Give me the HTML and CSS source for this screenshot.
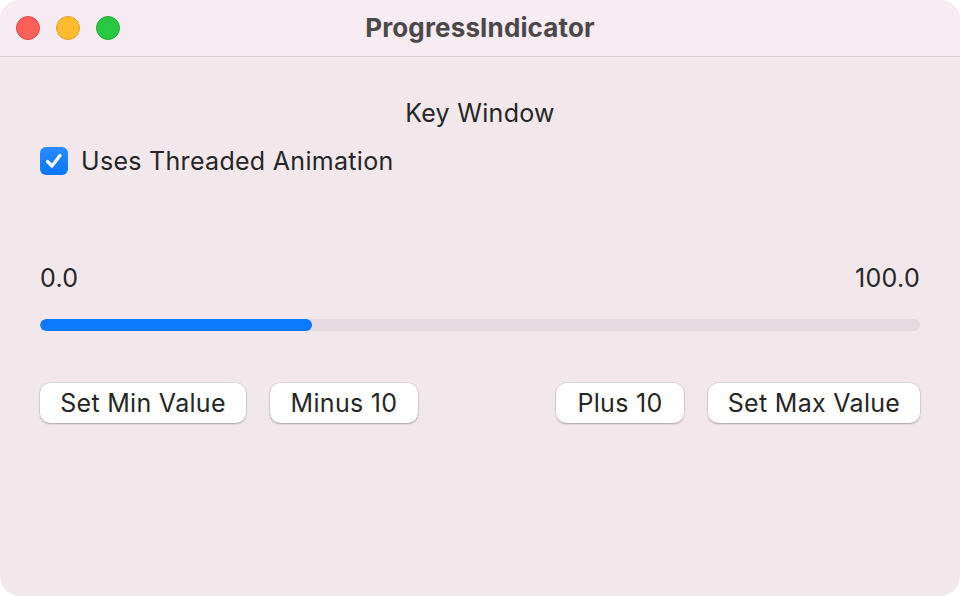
FILE: index.html
```html
<!DOCTYPE html>
<html>
<head>
<meta charset="utf-8">
<link rel="stylesheet" href="styles.css">
</head>
<body>
<div class="window">
  <div class="titlebar">
    <div class="lights">
      <span class="light red"></span>
      <span class="light yellow"></span>
      <span class="light green"></span>
    </div>
    <div class="title">ProgressIndicator</div>
  </div>
  <div class="content">
    <div class="key">Key Window</div>
    <label class="check-row">
      <span class="checkbox">
        <svg width="20" height="20" viewBox="0 0 20 20"><path d="M3.5 10.5 L8 15 L16 4.5" fill="none" stroke="#fff" stroke-width="3.2" stroke-linecap="round" stroke-linejoin="round"/></svg>
      </span>
      <span class="check-label">Uses Threaded Animation</span>
    </label>
    <div class="range">
      <span>0.0</span>
      <span>100.0</span>
    </div>
    <div class="track"><div class="fill" style="width:272px"></div></div>
    <div class="buttons">
      <div class="group">
        <button class="btn btn-min">Set Min Value</button>
        <button class="btn btn-minus">Minus 10</button>
      </div>
      <div class="group">
        <button class="btn btn-plus">Plus 10</button>
        <button class="btn btn-max">Set Max Value</button>
      </div>
    </div>
  </div>
</div>
</body>
</html>
```
FILE: styles.css
```css
html, body {
  margin: 0;
  padding: 0;
  background: #ffffff;
}
body {
  font-family: Inter, "Noto Sans", sans-serif;
  color: #262626;
}
.window {
  width: 960px;
  height: 596px;
  background: #f2e8ec;
  border-radius: 20px;
  overflow: hidden;
  display: flex;
  flex-direction: column;
}
.titlebar {
  flex: none;
  background: #f6ecf1;
  border-bottom: 1px solid #d5cbd0;
  box-sizing: border-box;
  height: 57px;
  display: flex;
  align-items: center;
  position: relative;
}
.lights {
  display: flex;
  gap: 16px;
  padding-left: 16px;
  margin-top: -1px;
}
.light {
  width: 24px;
  height: 24px;
  border-radius: 50%;
  box-sizing: border-box;
  display: block;
}
.red { background: #fe5f57; border: 1px solid #e2463f; }
.yellow { background: #febc2e; border: 1px solid #e0a024; }
.green { background: #28c840; border: 1px solid #1eab30; }
.title {
  position: absolute;
  left: 0;
  right: 0;
  top: 0;
  line-height: 55px;
  text-align: center;
  font-weight: 700;
  font-size: 26px;
  letter-spacing: 0.15px;
  color: #4b484a;
  pointer-events: none;
}
.content {
  padding: 0 40px;
  display: flex;
  flex-direction: column;
  font-size: 25px;
  letter-spacing: 0.3px;
}
.key {
  margin-top: 41px;
  text-align: center;
  line-height: 30px;
}
.check-row {
  display: flex;
  align-items: center;
  gap: 13px;
  margin-top: 18px;
}
.checkbox {
  width: 28px;
  height: 28px;
  border-radius: 6px;
  background: linear-gradient(#2a8bff, #0a77fb);
  display: flex;
  align-items: center;
  justify-content: center;
  flex: none;
}
.check-label {
  line-height: 30px;
}
.range {
  display: flex;
  justify-content: space-between;
  line-height: 30px;
  margin-top: 87px;
}
.track {
  margin-top: 26px;
  height: 12px;
  border-radius: 6px;
  background: #e4dadf;
  overflow: hidden;
}
.fill {
  height: 100%;
  background: #0b7aff;
  border-radius: 6px;
}
.buttons {
  display: flex;
  justify-content: space-between;
  margin-top: 52px;
}
.group {
  display: flex;
  gap: 24px;
}
.btn {
  height: 40px;
  border: none;
  border-radius: 10px;
  background: #ffffff;
  box-shadow: 0 0 0 0.5px rgba(0,0,0,0.12), 0 1px 2px rgba(0,0,0,0.25);
  font-family: inherit;
  font-size: 25px;
  letter-spacing: 0.3px;
  color: #262626;
  padding: 0;
  text-align: center;
}
.btn-min { width: 206px; }
.btn-minus { width: 148px; }
.btn-plus { width: 128px; }
.btn-max { width: 212px; }
```
